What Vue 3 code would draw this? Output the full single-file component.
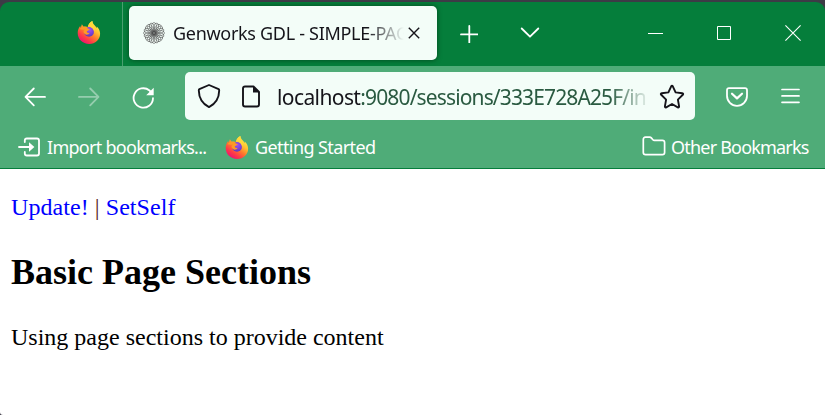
<script setup>
import { h } from 'vue'

const rays = Array.from({ length: 20 }, (_, i) => i * 18)

const stop = (offset, color) => h('stop', { offset, 'stop-color': color })
const FoxIcon = ({ uid }) =>
  h('svg', { viewBox: '0 0 24 24', width: 24, height: 24 }, [
    h('defs', [
      h('linearGradient', { id: uid + 'b', x1: '0.85', y1: '0.1', x2: '0.25', y2: '0.95' }, [
        stop('0', '#fff04a'), stop('0.3', '#ffc230'), stop('0.55', '#ff7a2c'), stop('0.78', '#ff3b47'), stop('1', '#ee1470'),
      ]),
      h('radialGradient', { id: uid + 'g', cx: '0.55', cy: '0.3', r: '0.75' }, [
        stop('0', '#a052ee'), stop('0.5', '#7a42dc'), stop('1', '#5b3bb4'),
      ]),
    ]),
    h('path', { fill: `url(#${uid}b)`, d: 'M15.4 1c.2 2 1.1 3.2 2.4 4.4 1 .9 1.4 1.7 1.7 2.6.3-.6.3-1 .2-1.6 2.2 2 3.4 4.5 3.4 7.3C23.1 19.6 18.3 24 12.2 24 5.6 24 .7 19.4.7 13.1c0-2.9.9-5.2 2.5-7.1L3.7 7.8 4.9 4.2 6.4 6.6c1.5-.4 3.1-.1 4.3.5C10.9 4.6 13 2.2 15.4 1z' }),
    h('circle', { cx: 12, cy: 11.9, r: 4.9, fill: `url(#${uid}g)` }),
    h('path', { fill: '#ff9a24', d: 'M2.4 9.2C4 6.8 6.9 6.1 10.3 7.1c-.3 1.3.8 1.8 2.5 1.9-.3 1.4-2.6 1.6-3 2.5-.2.9 1.5 1.9 3.1 1.3-1.4 2.3-4.5 2.4-5.8.5-1.1-1.7-.2-3 .6-3.7-2 .1-3.6-.1-5.3-.4z' }),
    h('path', { fill: '#ffd83a', d: 'M15.4 1c-2.4 1.2-3.7 3-4.1 5.4 3.4-.1 5.7 2.4 5.8 5.1 1.5-2.5.2-5.3-.9-6.5-1-1.2-1-2.6-.8-4z' }),
  ])
FoxIcon.props = ['uid']
</script>

<template>
  <div class="window">
    <header class="tabs">
      <div class="pinned"><FoxIcon uid="pin" /></div>
      <div class="tab">
        <svg class="favicon" width="22" height="22" viewBox="-11 -11 22 22" fill="none" stroke="#444" stroke-width=".5">
          <ellipse v-for="r in rays" :key="r" cx="5.7" rx="4.7" ry="2.5" :transform="`rotate(${r})`" />
          <circle r="2.6" stroke="#666" stroke-width="1" />
        </svg>
        <span class="tab-title">Genworks GDL - SIMPLE-PAG</span>
        <svg class="tab-close" width="12" height="12" viewBox="0 0 12 12" stroke="#15141a" stroke-width="1.4"><path d="M.8.8 11.2 11.2M11.2.8.8 11.2" /></svg>
      </div>
      <svg class="plus" width="18" height="18" viewBox="0 0 18 18" stroke="#fff" stroke-width="1.8" stroke-linecap="round"><path d="M9.3 1v16.500M1 9.4h16.500" /></svg>
      <svg class="chevron" width="20" height="12" viewBox="0 0 20 12" fill="none" stroke="#fff" stroke-width="1.8" stroke-linecap="round" stroke-linejoin="round"><path d="M1.7 1.500 10 9.7 18.3 1.500" /></svg>
      <div class="controls">
        <svg width="15" height="17" viewBox="0 0 15 17" stroke="#fff"><path d="M0 8.500h15" /></svg>
        <svg width="14" height="14" viewBox="0 0 14 14" fill="none" stroke="#fff"><path d="M.5.5h13v13H.5z" /></svg>
        <svg width="16" height="16" viewBox="0 0 16 16" stroke="#fff" stroke-width="1.1"><path d="M.4.4l15.2 15.2M15.6.4.4 15.6" /></svg>
      </div>
    </header>

    <nav class="toolbar">
      <svg class="back" width="22" height="20" viewBox="0 0 22 20" fill="none" stroke="#fff" stroke-width="1.8" stroke-linecap="round" stroke-linejoin="round"><path d="M9.8 1.500 1.500 9.9l8.3 8.4M1.8 9.9H21" /></svg>
      <svg class="forward" width="22" height="20" viewBox="0 0 22 20" fill="none" stroke="#fff" stroke-width="1.8" stroke-linecap="round" stroke-linejoin="round"><path d="M12.2 1.500l8.3 8.4-8.3 8.4M20.2 9.9H1" /></svg>
      <svg class="reload" width="23" height="22" viewBox="0 0 23 22" fill="none" stroke="#fff" stroke-width="1.8" stroke-linecap="round"><path d="M21 11.2A9.7 9.7 0 1 1 17.500 3.500L19.6 5.6" /><path d="M21.7.8v7.4h-7.500z" fill="#fff" stroke="none" /></svg>
      <div class="address">
        <svg class="shield" width="24" height="26" viewBox="0 0 24 26" fill="none" stroke="#15141a" stroke-width="1.9" stroke-linejoin="round"><path d="M12 2 21.6 6.1c.6.3.6.7.6 1.3-.1 7.4-3.2 13-10.2 16.7C5 20.4 1.9 14.8 1.8 7.4c0-.6 0-1 .6-1.3z" /></svg>
        <svg class="doc" width="20" height="23" viewBox="0 0 20 23" fill="none" stroke="#15141a" stroke-width="1.9" stroke-linejoin="round"><path d="M4 1.500h8.500l5.500 5.500v12.500q0 2-2 2H4q-2 0-2-2v-16q0-2 2-2z" /><path d="M12 1v6.500h6.500z" fill="#15141a" stroke="none" /></svg>
        <span class="url"><b>localhost</b>:9080/sessions/333E728A25F/in</span>
        <svg class="star" width="26" height="25" viewBox="0 0 26 25" fill="none" stroke="#15141a" stroke-width="1.9" stroke-linejoin="round"><path d="M12.2 2.3Q13 1 13.8 2.3l2.8 6.1 6.7.9q1.500.3.5 1.500l-4.9 4.8 1.2 6.7q.1 1.6-1.3 1L13 20l-5.8 3.3q-1.4.6-1.3-1l1.2-6.7-4.9-4.8q-1-1.2.5-1.500l6.7-.9z" /></svg>
      </div>
      <svg class="pocket" width="22" height="20" viewBox="0 0 22 20" fill="none" stroke="#fff" stroke-width="1.8" stroke-linecap="round" stroke-linejoin="round"><path d="M3 1.2h16q2 0 2 2v5.6a10 10 0 0 1-20 0V3.2q0-2 2-2z" /><path d="M6 6.7 11 11.4 16 6.7" stroke-width="2.2" /></svg>
      <svg class="menu" width="19" height="18" viewBox="0 0 19 18" stroke="#fff" stroke-width="1.7" stroke-linecap="round"><path d="M1 2.500h17M1 8.900h17M1 15.300h17" /></svg>
    </nav>

    <div class="bookmarks">
      <svg class="import" width="22" height="20" viewBox="0 0 22 20" fill="none" stroke="#fff" stroke-width="1.8" stroke-linecap="round"><path d="M6.8 5V3.500q0-2 2-2H19q2 0 2 2v13q0 2-2 2H8.8q-2 0-2-2V15M1 10h11" /><path d="M11 5.2 16.4 10 11 14.8z" fill="#fff" stroke="none" /></svg>
      <span class="bm-import">Import bookmarks...</span>
      <FoxIcon uid="bm" class="bm-fox" />
      <span class="bm-start">Getting Started</span>
      <svg class="folder" width="24" height="20" viewBox="0 0 24 20" fill="none" stroke="#fff" stroke-width="1.7" stroke-linejoin="round"><path d="M3.500 1.2h4.2q1 0 1.6.7l1.6 1.8q.5.6 1.500.6h8q2.2 0 2.2 2.2v10q0 2.2-2.2 2.2H3.500q-2.2 0-2.2-2.2V3.4q0-2.2 2.2-2.2z" /></svg>
      <span class="bm-other">Other Bookmarks</span>
    </div>

    <main class="page">
      <p class="links"><a>Update!</a> <i>|</i> <a>SetSelf</a></p>
      <h2>Basic Page Sections</h2>
      <p>Using page sections to provide content</p>
    </main>
  </div>
</template>

<style>
body { margin: 0; background: #3d3b46; overflow: hidden; }
</style>

<style scoped>
.window {
  box-sizing: border-box;
  width: 825px;
  height: 415px;
  padding-top: 2px;
  overflow: hidden;
  background: #3d3b46;
  font-family: "Noto Sans", "Open Sans", sans-serif;
}
svg { display: block; flex: none; }
span { white-space: nowrap; }

.tabs {
  display: flex;
  align-items: center;
  height: 64px;
  background: #057e3b;
  border-radius: 9px 9px 0 0;
}
.pinned {
  box-sizing: border-box;
  width: 123px;
  height: 64px;
  padding: 18px 0 0 77px;
  border-right: 1px solid #4a9f70;
}
.tab {
  display: flex;
  align-items: center;
  box-sizing: border-box;
  width: 308px;
  height: 54px;
  margin: 0 0 2px 6px;
  padding-left: 14px;
  border-radius: 5px;
  background: #f3fdf8;
  box-shadow: 0 0 5px rgba(0, 35, 10, .6);
}
.favicon { margin-bottom: 1px; }
.tab-title {
  width: 231px;
  margin-left: 8px;
  font-size: 18px;
  line-height: 26px;
  color: #15141a;
  letter-spacing: -.3px;
  -webkit-mask-image: linear-gradient(90deg, #000 84%, transparent);
  mask-image: linear-gradient(90deg, #000 84%, transparent);
}
.tab-close { margin-left: 4px; }
.plus { margin-left: 23px; }
.chevron { margin: 0 0 2px 42px; }
.controls {
  display: flex;
  align-items: center;
  gap: 54px;
  margin: 0 24px 2px auto;
}

.toolbar {
  display: flex;
  align-items: center;
  box-sizing: border-box;
  height: 60px;
  background: #4fac78;
}
.back { margin: 2px 0 0 24px; }
.forward { margin: 2px 0 0 32px; opacity: .4; }
.reload { margin: 3px 0 0 32px; }
.address {
  display: flex;
  align-items: center;
  width: 510px;
  height: 48px;
  margin-left: 30px;
  border-radius: 5px;
  background: #f3fdf8;
}
.shield { margin-left: 12px; }
.doc { margin-left: 20px; }
.url {
  width: 374px;
  margin: 1px 0 0 16px;
  color: #2a5a41;
  font-size: 21px;
  line-height: 32px;
  letter-spacing: -.87px;
  -webkit-mask-image: linear-gradient(90deg, #000 89%, transparent);
  mask-image: linear-gradient(90deg, #000 89%, transparent);
}
.url b { font-weight: 400; color: #15141a; letter-spacing: -.6px; }
.star { margin-left: 8px; }
.pocket { margin: 2px 0 0 31px; }
.menu { margin-left: 33px; }

.bookmarks {
  display: flex;
  align-items: center;
  box-sizing: border-box;
  height: 43px;
  color: #fff;
  font-size: 18px;
  line-height: 26px;
  background: #4fac78;
  border-bottom: 1px solid #057e3b;
}
.import { margin-left: 18px; }
.bm-import { width: 160px; margin-left: 7px; letter-spacing: -.72px; }
.bm-fox { margin-left: 18px; }
.bm-start { margin-left: 6px; letter-spacing: -.6px; }
.folder { margin: 0 0 2px auto; }
.bm-other { width: 138px; margin: 0 16px 0 5px; letter-spacing: -.8px; }

.page {
  box-sizing: border-box;
  height: 246px;
  padding: 24px 11px 0;
  background: #fff;
  border-radius: 0 0 0 3px;
  font-family: "Liberation Serif", serif;
  font-size: 24px;
  line-height: 28px;
  color: #000;
}
.page p { margin: 0; }
.page .links { letter-spacing: .06px; }
.page a { color: #00f; }
.page i { font-style: normal; color: #551a1a; }
.page h2 {
  margin: 30px 0;
  font-size: 36px;
  line-height: 42px;
}
</style>
